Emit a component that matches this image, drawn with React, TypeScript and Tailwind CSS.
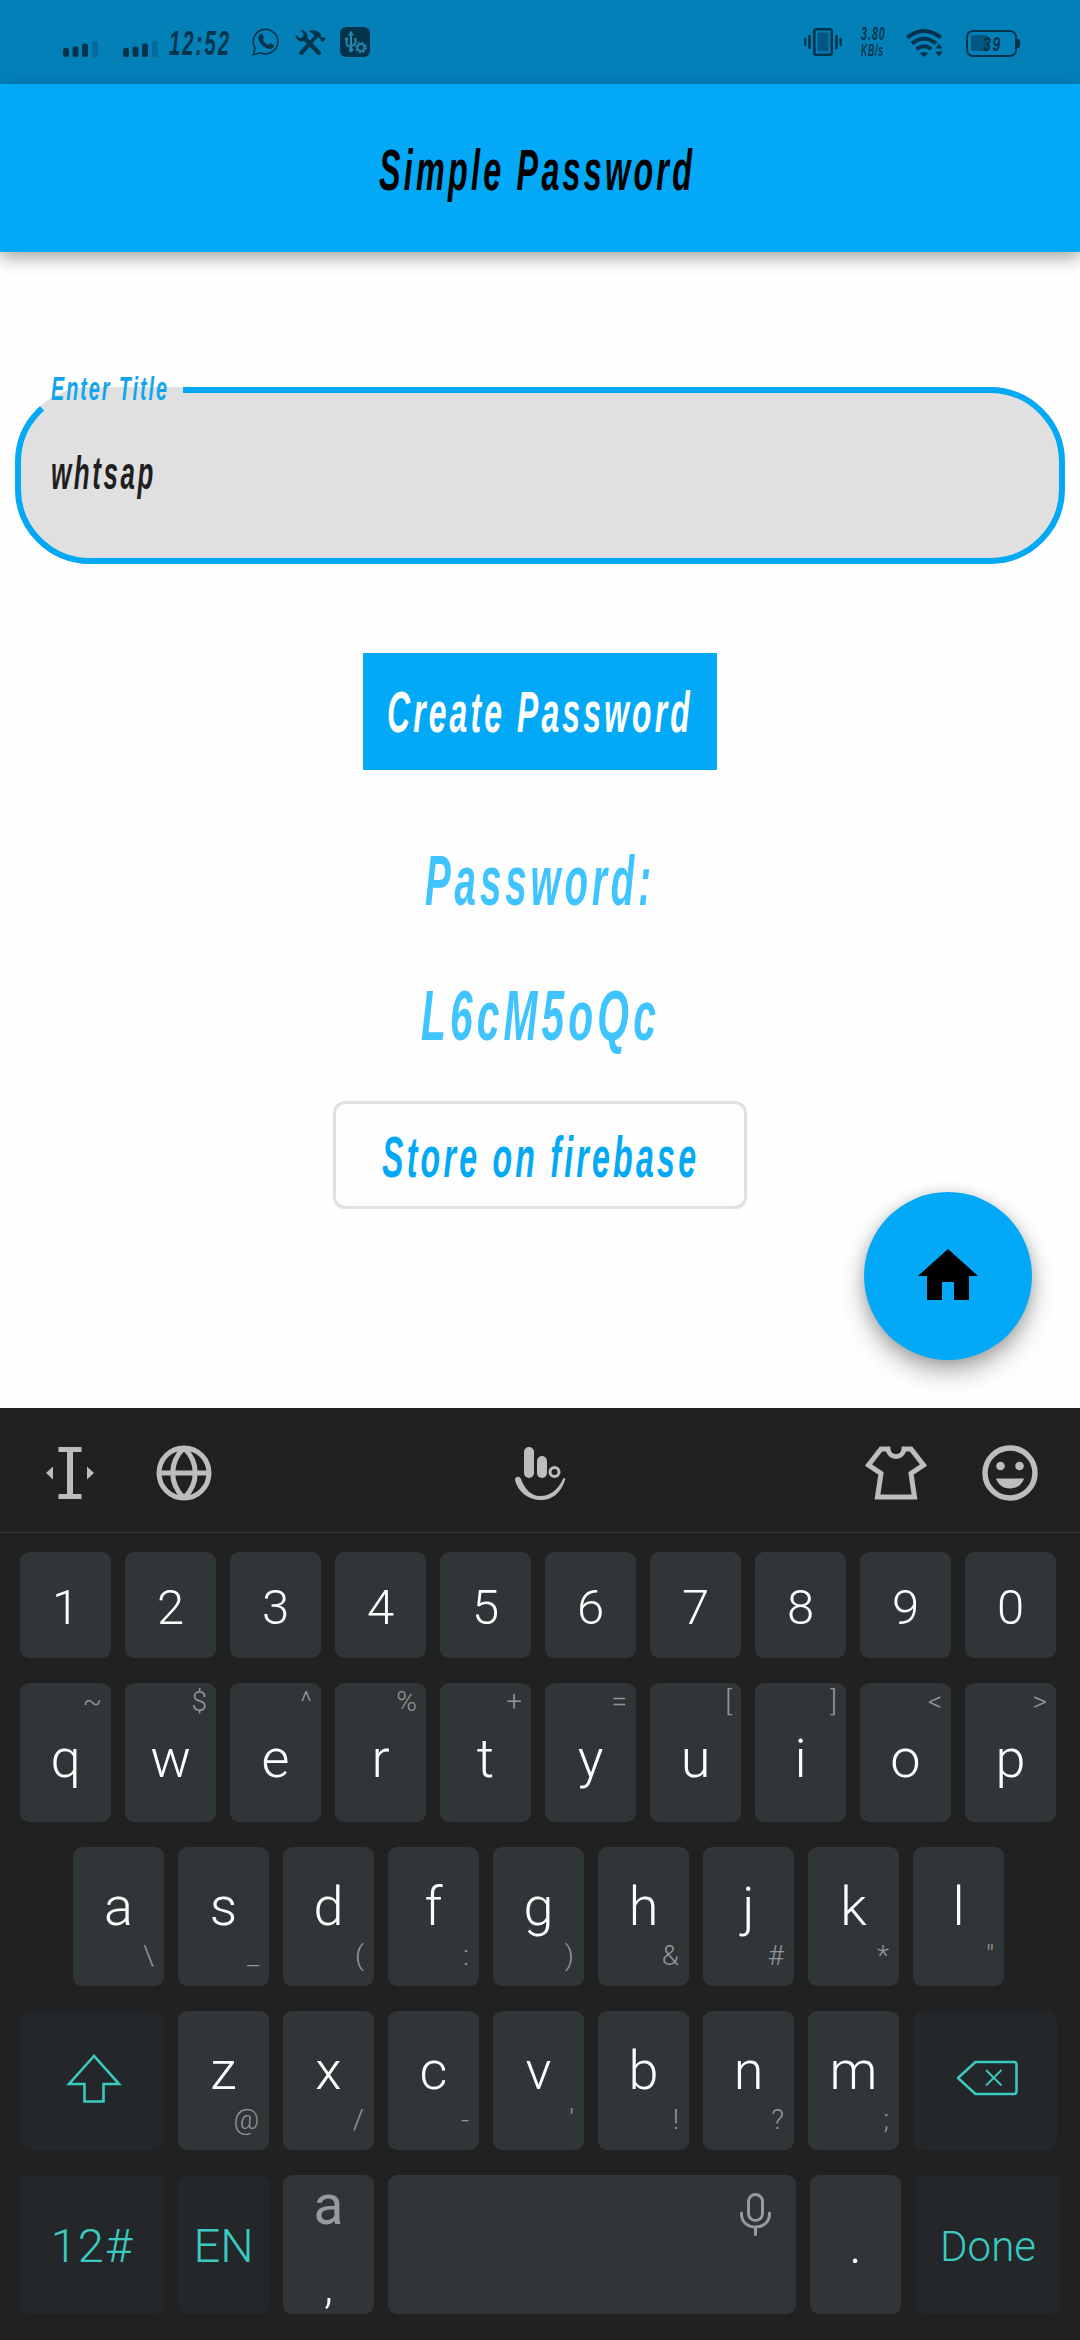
import { useLayoutEffect, useRef, useState } from "react";
import type { ReactNode } from "react";

/* Condensed, slanted display lettering that fills a given width. */
function Condensed({ width, className, children }: { width: number; className: string; children: ReactNode }) {
  const ref = useRef<HTMLSpanElement>(null);
  const [scale, setScale] = useState(0.65);
  useLayoutEffect(() => {
    if (ref.current) setScale(width / ref.current.offsetWidth);
  }, [width]);
  return (
    <div style={{ width }} className="whitespace-nowrap">
      <span
        ref={ref}
        style={{ transform: `scaleX(${scale})` }}
        className={`block w-fit origin-left font-['Liberation_Sans',sans-serif] font-bold italic tracking-[0.1em] ${className}`}
      >
        {children}
      </span>
    </div>
  );
}

function Signal() {
  return (
    <svg width="36" height="16" viewBox="0 0 36 16" fill="#02354c">
      <rect x="0" y="7" width="6" height="9" rx="2" />
      <rect x="9.5" y="5.5" width="6" height="10.5" rx="2" />
      <rect x="19" y="2.5" width="6" height="13.5" rx="2" />
      <rect x="29" y="0" width="6" height="16" rx="2" fill="#036a9b" />
    </svg>
  );
}

function StatusBar() {
  return (
    <div className="flex h-[84px] bg-[#0480b9] text-[#02354c]">
      <div className="ml-[63px] mt-[41px] w-[60px]"><Signal /></div>
      <div className="mt-[41px] w-[46px]"><Signal /></div>
      <div className="mt-[22px] w-[83px]">
        <Condensed width={62} className="text-[35px] leading-[42px]">12:52</Condensed>
      </div>
      <svg className="mt-7" width="28" height="28" viewBox="0 0 28 28" fill="none" stroke="#02354c" strokeWidth="1.6">
        <path d="M1.200 26.800l1.800-6.800A12.300 12.300 0 1 1 8.400 24.800z" />
        <path d="M8.2 6.2c1.4-.7 2.200-.3 2.700 1l.9 2.200c.2.600-.1 1.200-1.100 2.300 1.300 2.500 3.200 4.300 5.700 5.300 1.300-1.500 1.700-1.900 2.400-1.600l2.600 1.300c.8.4.8 1.300.2 2.400-1 1.800-3.400 2.400-6.200 1.300-4.300-1.600-7.300-4.600-8.600-8.400-.8-2.300-.3-4.700 1.400-5.800z" fill="#02354c" stroke="none" />
      </svg>
      <svg className="ml-[15px] mt-[29px]" width="31" height="26" viewBox="0 0 31 26" fill="#02354c">
        <path d="M5.500 1.200A6.300 6.300 0 0 1 12.300 9l13 13.200a2.200 2.200 0 0 1-3.200 3.100L9.200 12A6.300 6.300 0 0 1 .6 5.600l4 3.500 3.200-.9 1-3z" />
        <path d="M13.500 2.200C18 .2 22 1 25.600 4.800l.3 3.200 1.400.8 1.800-.8 1.600 2-3 3.300-2.100-1.700.1-1.700-2.700-2L8 25.200a2 2 0 0 1-3.300-2.700L19.600 6.700c-1.600-2.300-3.500-3.600-6.100-4.500z" />
      </svg>
      <svg className="ml-[14px] mt-[27px]" width="30" height="30" viewBox="0 0 30 30" fill="none" stroke="#2585ad">
        <rect width="30" height="30" rx="6" fill="#02354c" stroke="none" />
        <path d="M11 8v16M6.500 12v4q0 3 4.500 4M15.500 11v4q0 3-4.500 4" strokeWidth="2" />
        <path d="M11 3.500l3 5H8z" fill="#2585ad" stroke="none" />
        <circle cx="11" cy="23" r="2.200" fill="#2585ad" stroke="none" />
        <circle cx="6.500" cy="11.800" r="1.600" fill="#2585ad" stroke="none" />
        <circle cx="21" cy="20.500" r="3.500" strokeWidth="2" fill="#02354c" />
        <circle cx="21" cy="20.500" r="5" strokeWidth="1.800" strokeDasharray="2 1.930" />
      </svg>

      <svg className="ml-auto mt-7" width="38" height="28" viewBox="0 0 38 28" fill="none" stroke="#02354c">
        <rect x="10.300" y="1.300" width="17.400" height="25.400" rx="2" strokeWidth="2.600" />
        <rect x="13.500" y="4.500" width="11" height="19" fill="#03567f" stroke="none" />
        <path d="M5.500 8v12M32.500 8v12" strokeWidth="2.600" strokeLinecap="round" />
        <path d="M1.300 11v6M36.700 11v6" strokeWidth="2.400" strokeLinecap="round" />
      </svg>
      <div className="ml-[19px] mt-[25px] w-[45px]">
        <Condensed width={25} className="text-[19px] leading-[18px]">3.80</Condensed>
        <Condensed width={23} className="text-[16px] leading-[16px]">KB/s</Condensed>
      </div>
      <svg className="mt-[29px]" width="37" height="28" viewBox="0 0 37 28" fill="none" stroke="#02354c" strokeWidth="4">
        <path d="M1.200 8.500Q18 -4.500 34.800 8.500" />
        <path d="M5.800 14.500Q18 5 30.200 14.500" />
        <path d="M10.600 20Q18 14.400 25.400 20" />
        <path d="M14 24.400Q18 21.800 22 24.400L18 28z" fill="#02354c" stroke="none" />
        <path d="M33 14.500l3.500 5h-7zM33 27.500l3.500-5h-7z" fill="#02354c" stroke="none" />
      </svg>
      <div className="ml-[23px] mr-[60px] mt-[30px] flex h-[27px] items-center">
        <div className="relative h-[27px] w-[51px] rounded-[7px] border-[2.500px] border-[#02354c]">
          <div className="absolute left-[3px] top-[3px] h-[16px] w-[17px] rounded-[2px] bg-[#03567f]" />
          <div className="absolute left-[15px] top-[1px]">
            <Condensed width={19} className="text-[21px] leading-[21px]">39</Condensed>
          </div>
        </div>
        <div className="h-[9px] w-[3px] rounded-r-[2px] bg-[#02354c]" />
      </div>
    </div>
  );
}

function TitleField() {
  return (
    <div className="relative mx-[15px] mt-[135px] h-[177px] rounded-[75px] bg-[#e0e0e0]">
      <div className="absolute inset-0 rounded-[75px] border-[6px] border-[#03a9f4] [clip-path:polygon(0_0,8px_0,75px_75px,168px_75px,168px_0,100%_0,100%_100%,0_100%)]" />
      <div className="absolute left-[36px] top-[-19px]">
        <Condensed width={118} className="text-[34px] leading-[40px] text-[#13a5ec]">Enter Title</Condensed>
      </div>
      <div className="pl-[36px] pt-[58px]">
        <Condensed width={105} className="text-[46px] leading-[56px] text-[#1f1f1f]">whtsap</Condensed>
      </div>
    </div>
  );
}

type KeyDef = [string, string?];

const digits: KeyDef[] = [["1"], ["2"], ["3"], ["4"], ["5"], ["6"], ["7"], ["8"], ["9"], ["0"]];
const top: KeyDef[] = [["q", "~"], ["w", "$"], ["e", "^"], ["r", "%"], ["t", "+"], ["y", "="], ["u", "["], ["i", "]"], ["o", "<"], ["p", ">"]];
const home: KeyDef[] = [["a", "\\"], ["s", "_"], ["d", "("], ["f", ":"], ["g", ")"], ["h", "&"], ["j", "#"], ["k", "*"], ["l", "\""]];
const bottom: KeyDef[] = [["z", "@"], ["x", "/"], ["c", "-"], ["v", "'"], ["b", "!"], ["n", "?"], ["m", ";"]];

function Key({ def, size, hint }: { def: KeyDef; size: string; hint: string }) {
  return (
    <div className={`relative w-[91px] shrink-0 rounded-[9px] bg-[#303537] text-center text-white ${size}`}>
      {def[0]}
      {def[1] && <span className={`absolute text-[28px] leading-[37px] text-[#939596] ${hint}`}>{def[1]}</span>}
    </div>
  );
}

const upper = "right-[9px] top-0";
const lower = "right-[10px] top-[90px]";
const dark = "flex h-[139px] shrink-0 justify-center rounded-[9px] bg-[#23272a] text-[#3bcac0]";

function Toolbar() {
  return (
    <div className="flex h-[125px] items-start border-b border-[#333638]">
      <svg className="ml-[46px] mt-[39px]" width="48" height="52" viewBox="0 0 48 52" fill="#bdbdbd">
        <path d="M12.500 0h23v5h-8.500v42h8.500v5h-23v-5H21V5h-8.500zM0 26l7-6.500v13zM48 26l-7-6.500v13z" />
      </svg>
      <svg className="ml-[62px] mt-[37px]" width="56" height="56" viewBox="0 0 56 56" fill="none" stroke="#bdbdbd" strokeWidth="5">
        <circle cx="28" cy="28" r="25" />
        <path d="M3 28h50M28 3C13 17 13 39 28 53M28 3C43 17 43 39 28 53" />
      </svg>
      <svg className="ml-[303px] mt-[39px]" width="51" height="54" viewBox="0 0 51 54" fill="#bdbdbd">
        <rect x="9" y="0" width="10" height="31" rx="5" />
        <rect x="22" y="9" width="10" height="22" rx="5" />
        <circle cx="39.500" cy="25" r="4.500" fill="none" stroke="#bdbdbd" strokeWidth="3" />
        <path d="M0 33c0-4 5-4 6-1 4 11 11 17 19 17 10 0 18-6 23-17 1-2 3-1 2 1-4 13-13 20-24 20C13 53 3 45 0 33z" />
      </svg>
      <svg className="ml-[299px] mt-[38px]" width="62" height="54" viewBox="0 0 62 54" fill="none" stroke="#bdbdbd" strokeWidth="5">
        <path d="M16 3h7c1 10 15 10 16 0h7l12.500 16L46 27.500 49.500 51h-37L16 27.500 3.500 19z" />
      </svg>
      <svg className="ml-[55px] mt-[37px]" width="56" height="56" viewBox="0 0 56 56" fill="#bdbdbd">
        <circle cx="28" cy="28" r="25" fill="none" stroke="#bdbdbd" strokeWidth="5.500" />
        <circle cx="18.500" cy="21" r="4.300" />
        <circle cx="37.500" cy="21" r="4.300" />
        <path d="M14 33.500h28c-2 6-7 10-14 10s-12-4-14-10z" />
      </svg>
    </div>
  );
}

function Keyboard() {
  return (
    <div className="h-[932px] bg-[#212121] font-[Roboto,sans-serif] font-light">
      <Toolbar />
      <div className="flex flex-col gap-[25px] pl-5 pt-[19px]">
        <div className="flex gap-[14px]">
          {digits.map((k) => <Key key={k[0]} def={k} size="h-[106px] text-[49px] leading-[112px]" hint={upper} />)}
        </div>
        <div className="flex gap-[14px]">
          {top.map((k) => <Key key={k[0]} def={k} size="h-[139px] text-[54px] leading-[151px]" hint={upper} />)}
        </div>
        <div className="flex gap-[14px] pl-[53px]">
          {home.map((k) => <Key key={k[0]} def={k} size="h-[139px] text-[54px] leading-[119px]" hint={lower} />)}
        </div>
        <div className="flex gap-[14px]">
          <div className={`${dark} w-[144px]`}>
            <svg className="ml-[3px] mt-[42px]" width="56" height="52" viewBox="0 0 56 52" fill="none" stroke="currentColor" strokeWidth="2.600">
              <path d="M28 3L3 31h15.500v17.500h19V31H53z" />
            </svg>
          </div>
          {bottom.map((k) => <Key key={k[0]} def={k} size="h-[139px] text-[54px] leading-[119px]" hint={lower} />)}
          <div className={`${dark} w-[144px]`}>
            <svg className="ml-[3px] mt-[49px]" width="62" height="36" viewBox="0 0 62 36" fill="none" stroke="currentColor" strokeWidth="2.500">
              <path d="M2 18L19.500 2H58q2.500 0 2.500 2.500v27q0 2.500-2.500 2.500H19.500z" strokeLinejoin="round" />
              <path d="M30 10l15.500 15.500M45.500 10L30 25.500" strokeWidth="1.800" />
            </svg>
          </div>
        </div>
        <div className="flex">
          <div className={`${dark} w-[144px] text-[47px] leading-[142px] tracking-[1px]`}>12#</div>
          <div className={`${dark} ml-[14px] w-[91px] text-[47px] leading-[142px]`}>EN</div>
          <div className="relative ml-[14px] h-[139px] w-[91px] rounded-[9px] bg-[#303537] text-center">
            <div className="text-[55px] font-normal leading-[60px] text-[#989a9b]">a</div>
            <div className="text-[49px] leading-[101px] text-white">,</div>
          </div>
          <div className="ml-[14px] flex h-[139px] w-[408px] justify-end rounded-[9px] bg-[#303537] pr-[25px] pt-[18px]">
            <svg width="31" height="43" viewBox="0 0 31 43" fill="none" stroke="#989a9b" strokeWidth="3" strokeLinecap="round">
              <rect x="8.500" y="1.500" width="14" height="26" rx="7" />
              <path d="M1.500 20v1c0 8 6 13 14 13s14-5 14-13v-1M15.500 34v7.500" />
            </svg>
          </div>
          <div className="ml-[14px] h-[139px] w-[91px] rounded-[9px] bg-[#303537] text-center text-[54px] leading-[140px] text-white">.</div>
          <div className={`${dark} ml-[15px] w-[144px] text-[42px] leading-[143px]`}>Done</div>
        </div>
      </div>
    </div>
  );
}

export default function App() {
  return (
    <div className="h-[2340px] w-[1080px] overflow-hidden bg-[#fefefe]">
      <StatusBar />
      <div className="relative z-10 flex h-[168px] justify-center bg-[#03a9f6] pr-[7px] pt-[3px] shadow-[0_6px_16px_rgba(0,0,0,0.35)]">
        <Condensed width={316} className="text-[58px] leading-[165px] text-black">Simple Password</Condensed>
      </div>
      <div className="relative flow-root h-[1156px]">
        <TitleField />
        <div className="mx-auto mt-[89px] flex h-[117px] w-[354px] justify-center bg-[#03a9f6]">
          <Condensed width={306} className="text-[58px] leading-[117px] text-white">Create Password</Condensed>
        </div>
        <div className="mt-[61px] flex justify-center">
          <Condensed width={230} className="text-[71px] leading-[100px] text-[#40c4ff]">Password:</Condensed>
        </div>
        <div className="mt-[35px] flex justify-center">
          <Condensed width={239} className="text-[71px] leading-[100px] text-[#40c4ff]">L6cM5oQc</Condensed>
        </div>
        <div className="mx-auto mt-[35px] flex h-[108px] w-[414px] justify-center rounded-[12px] border-[3px] border-[#e0e0e0]">
          <Condensed width={317} className="text-[58px] leading-[106px] text-[#03a9f4]">Store on firebase</Condensed>
        </div>
        <div className="absolute bottom-[48px] right-[48px] flex h-[168px] w-[168px] items-center justify-center rounded-full bg-[#03a9f6] shadow-[0_12px_24px_rgba(0,0,0,0.3),0_2px_14px_rgba(0,0,0,0.15)]">
          <svg width="72" height="72" viewBox="0 0 24 24" fill="#000">
            <path d="M10 20v-6h4v6h5v-8h3L12 3 2 12h3v8z" />
          </svg>
        </div>
      </div>
      <Keyboard />
    </div>
  );
}
